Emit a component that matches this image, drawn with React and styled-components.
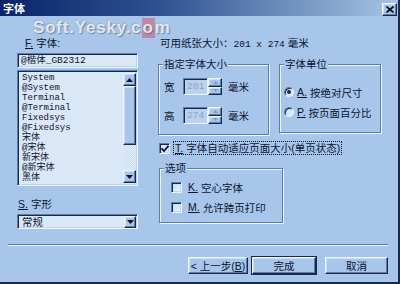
import React from 'react';
import styled, { createGlobalStyle, css } from 'styled-components';

const C = {
  bg: '#a7c6ea',
  dark: '#18294e',
  shadow: '#5e7ea8',
  light: '#eef5fd',
  field: '#dae7f7',
  text: '#0c1430',
  disabledText: '#86a6cf',
};

const GlobalStyle = createGlobalStyle`
  html, body { margin: 0; padding: 0; background: ${C.bg}; }
  body {
    width: 400px; height: 284px; overflow: hidden;
    font-family: "Liberation Sans", "Noto Sans CJK SC", sans-serif;
    font-size: 10.5px; color: ${C.text};
  }
  * { box-sizing: border-box; }
`;

const sunken = css`
  border: 1px solid;
  border-color: ${C.shadow} ${C.light} ${C.light} ${C.shadow};
  box-shadow: inset 1px 1px 0 ${C.dark}, inset -1px -1px 0 #bcd4ef;
`;

const raised = css`
  border: 1px solid;
  border-color: ${C.light} ${C.dark} ${C.dark} ${C.light};
  box-shadow: inset -1px -1px 0 ${C.shadow}, inset 1px 1px 0 #c9ddf3;
  background: ${C.bg};
`;

const Window = styled.div`
  position: relative;
  width: 400px;
  height: 284px;
  display: flex;
  flex-direction: column;
  border-right: 2px solid ${C.dark};
  border-bottom: 2px solid ${C.dark};
  background: ${C.bg};
`;

const TitleBar = styled.div`
  height: 16px;
  flex: none;
  display: flex;
  align-items: center;
  justify-content: space-between;
  padding: 0 1px 0 3px;
  background: linear-gradient(to right, #0a246a 0%, #2f5290 40%, #a6c4e4 100%);
`;

const Title = styled.span`
  color: #fff;
  font-family: "Noto Sans CJK SC", sans-serif;
  font-weight: 700;
  font-size: 11px;
  line-height: 14px;
`;

const CloseButton = styled.div`
  ${raised};
  width: 15px;
  height: 13px;
  display: flex;
  align-items: center;
  justify-content: center;
  margin-top: 2px;
`;

const Watermark = styled.div`
  position: absolute;
  left: 33px;
  top: 18px;
  font-family: "Liberation Sans", sans-serif;
  font-weight: 700;
  font-size: 17px;
  letter-spacing: 0.8px;
  color: rgba(255, 255, 255, 0.78);
  text-shadow: 1px 1px 1px rgba(70, 80, 100, 0.55), -1px -1px 0 rgba(140, 150, 170, 0.35);
  pointer-events: none;
`;

const WatermarkMark = styled.span`
  display: inline-block;
  background: rgba(205, 90, 110, 0.55);
  padding: 0 1px;
`;

const Main = styled.div`
  display: flex;
  gap: 20px;
  padding: 20px 0 0 17px;
`;

const LeftCol = styled.div`
  width: 121px;
  display: flex;
  flex-direction: column;
`;

const RightCol = styled.div`
  width: 231px;
  display: flex;
  flex-direction: column;
`;

const FieldLabel = styled.div`
  height: 14px;
  line-height: 14px;
  padding-left: ${(p) => p.$indent}px;
  margin-top: ${(p) => p.$top || 0}px;
`;

const Key = styled.span`
  text-decoration: underline;
  margin-right: 3px;
`;

const ButtonKey = styled.span`
  text-decoration: underline;
`;

const TextField = styled.div`
  ${sunken};
  height: 15px;
  margin-top: 3px;
  background: ${C.field};
  font-family: "Liberation Mono", "Noto Sans CJK SC", monospace;
  font-size: 9.5px;
  line-height: 13px;
  padding-left: 3px;
`;

const ListBox = styled.div`
  ${sunken};
  height: 116px;
  margin-top: 2px;
  background: ${C.field};
  display: flex;
  padding: 2px 1px 2px 2px;
`;

const Items = styled.div`
  flex: 1;
  padding-left: 2px;
  overflow: hidden;
`;

const Item = styled.div`
  font-family: "Liberation Mono", "Noto Sans CJK SC", monospace;
  font-size: 9px;
  line-height: 10px;
  height: 10px;
  white-space: nowrap;
`;

const ScrollBar = styled.div`
  width: 13px;
  display: flex;
  flex-direction: column;
  background: repeating-conic-gradient(#c9dcf2 0% 25%, #e4eefa 0% 50%) 0 0 / 2px 2px;
`;

const ArrowButton = styled.div`
  ${raised};
  width: 13px;
  height: 13px;
  flex: none;
  display: flex;
  align-items: center;
  justify-content: center;
`;

const Thumb = styled.div`
  ${raised};
  height: 59px;
  flex: none;
`;

const Track = styled.div`
  flex: 1;
`;

const Select = styled.div`
  ${sunken};
  height: 15px;
  margin-top: 3px;
  background: ${C.field};
  display: flex;
  align-items: stretch;
  padding: 1px;
`;

const SelectText = styled.div`
  flex: 1;
  padding-left: 3px;
  line-height: 12px;
  font-size: 10.5px;
`;

const SelectArrow = styled(ArrowButton)`
  width: 12px;
  height: 12px;
`;

const InfoText = styled.div`
  height: 14px;
  line-height: 14px;
  padding-left: 2px;
  white-space: nowrap;
`;

const Digits = styled.span`
  font-family: "Liberation Mono", monospace;
  font-size: 9.5px;
`;

const GroupRow = styled.div`
  display: flex;
  gap: 10px;
  margin-top: 14px;
`;

const Group = styled.div`
  position: relative;
  width: ${(p) => p.$w}px;
  height: ${(p) => p.$h}px;
  margin-top: ${(p) => p.$top || 0}px;
  margin-left: ${(p) => p.$left || 0}px;
  border: 1px solid ${C.shadow};
  box-shadow: 1px 1px 0 ${C.light}, inset 1px 1px 0 ${C.light};
  padding: ${(p) => p.$pad};
  display: flex;
  flex-direction: column;
  gap: ${(p) => p.$gap}px;
`;

const Legend = styled.span`
  position: absolute;
  top: -8px;
  left: 4px;
  padding: 0 1px;
  background: ${C.bg};
  line-height: 14px;
`;

const SizeRow = styled.div`
  display: flex;
  align-items: center;
  height: 17px;
`;

const SizeLabel = styled.span`
  width: 19px;
`;

const NumberField = styled.div`
  ${sunken};
  width: 25px;
  height: 17px;
  background: #b9d1ed;
  color: ${C.disabledText};
  font-family: "Liberation Mono", monospace;
  font-size: 9.5px;
  line-height: 15px;
  padding-left: 3px;
`;

const Spinner = styled.div`
  width: 14px;
  height: 17px;
  display: flex;
  flex-direction: column;
`;

const SpinHalf = styled.div`
  ${raised};
  flex: 1;
  display: flex;
  align-items: center;
  justify-content: center;
`;

const Unit = styled.span`
  margin-left: 6px;
`;

const OptionRow = styled.div`
  display: flex;
  align-items: center;
  height: 14px;
  white-space: nowrap;
`;

const Radio = styled.span`
  width: 10px;
  height: 10px;
  border-radius: 50%;
  flex: none;
  border: 1px solid;
  border-color: ${C.shadow} ${C.light} ${C.light} ${C.shadow};
  box-shadow: inset 1px 1px 0 ${C.dark};
  background: ${C.field};
  display: flex;
  align-items: center;
  justify-content: center;
  margin-right: 3px;
  &::after {
    content: '';
    width: 4px;
    height: 4px;
    border-radius: 50%;
    background: ${(p) => (p.$on ? C.dark : 'transparent')};
  }
`;

const CheckBox = styled.span`
  ${sunken};
  width: 11px;
  height: 11px;
  flex: none;
  background: ${(p) => (p.$flat ? 'linear-gradient(135deg, #c4d8f0, #eef5fd)' : C.field)};
  display: flex;
  align-items: center;
  justify-content: center;
  margin-right: ${(p) => p.$gap || 4}px;
`;

const FocusLabel = styled.span`
  outline: 1px dotted ${C.text};
  outline-offset: 0;
  padding: 0 1px;
  line-height: 12px;
`;

const CheckRow = styled(OptionRow)`
  margin-top: 6px;
  padding-left: 1px;
`;

const Separator = styled.div`
  margin: 15px 0 0 8px;
  width: 380px;
  height: 2px;
  border-top: 1px solid ${C.shadow};
  border-bottom: 1px solid ${C.light};
`;

const ButtonRow = styled.div`
  display: flex;
  justify-content: flex-end;
  align-items: center;
  margin-top: 11px;
  padding-right: 10px;
`;

const Button = styled.div`
  ${raised};
  width: ${(p) => p.$w}px;
  height: 17px;
  margin-left: ${(p) => p.$gap}px;
  display: flex;
  align-items: center;
  justify-content: center;
  line-height: 14px;
  ${(p) =>
    p.$default &&
    css`
      outline: 1px solid ${C.dark};
      outline-offset: 0;
    `}
`;

const fonts = ['System', '@System', 'Terminal', '@Terminal', 'Fixedsys', '@Fixedsys', '宋体', '@宋体', '新宋体', '@新宋体', '黑体'];

const UpArrow = () => (
  <svg width="7" height="4" viewBox="0 0 7 4"><path d="M3.5 0L7 4H0z" fill={C.text} /></svg>
);
const DownArrow = () => (
  <svg width="7" height="4" viewBox="0 0 7 4"><path d="M0 0h7L3.5 4z" fill={C.text} /></svg>
);
const SmallUp = () => (
  <svg width="5" height="3" viewBox="0 0 5 3"><path d="M2.5 0L5 3H0z" fill="#7f9cc4" /></svg>
);
const SmallDown = () => (
  <svg width="5" height="3" viewBox="0 0 5 3"><path d="M0 0h5L2.5 3z" fill="#7f9cc4" /></svg>
);
const Check = () => (
  <svg width="8" height="7" viewBox="0 0 8 7"><path d="M0.5 3.5L3 6L7.5 0.8" stroke={C.text} strokeWidth="1.8" fill="none" /></svg>
);
const CloseX = () => (
  <svg width="8" height="7" viewBox="0 0 8 7"><path d="M0.5 0.5L7.5 6.5M7.5 0.5L0.5 6.5" stroke="#000" strokeWidth="1.6" /></svg>
);

export default function App() {
  return (
    <>
      <GlobalStyle />
      <Window>
        <TitleBar>
          <Title>字体</Title>
          <CloseButton><CloseX /></CloseButton>
        </TitleBar>
        <Main>
          <LeftCol>
            <FieldLabel $indent={8}><Key>F.</Key>字体:</FieldLabel>
            <TextField>@楷体_GB2312</TextField>
            <ListBox>
              <Items>
                {fonts.map((f) => <Item key={f}>{f}</Item>)}
              </Items>
              <ScrollBar>
                <ArrowButton><UpArrow /></ArrowButton>
                <Thumb />
                <Track />
                <ArrowButton><DownArrow /></ArrowButton>
              </ScrollBar>
            </ListBox>
            <FieldLabel $indent={1} $top={11}><Key>S.</Key>字形</FieldLabel>
            <Select>
              <SelectText>常规</SelectText>
              <SelectArrow><DownArrow /></SelectArrow>
            </Select>
          </LeftCol>
          <RightCol>
            <InfoText>可用纸张大小：<Digits>201 x 274</Digits> 毫米</InfoText>
            <GroupRow>
              <Group $w={111} $h={71} $pad="13px 0 0 5px" $gap={12}>
                <Legend>指定字体大小</Legend>
                <SizeRow>
                  <SizeLabel>宽</SizeLabel>
                  <NumberField>201</NumberField>
                  <Spinner><SpinHalf><SmallUp /></SpinHalf><SpinHalf><SmallDown /></SpinHalf></Spinner>
                  <Unit>毫米</Unit>
                </SizeRow>
                <SizeRow>
                  <SizeLabel>高</SizeLabel>
                  <NumberField>274</NumberField>
                  <Spinner><SpinHalf><SmallUp /></SpinHalf><SpinHalf><SmallDown /></SpinHalf></Spinner>
                  <Unit>毫米</Unit>
                </SizeRow>
              </Group>
              <Group $w={102} $h={69} $pad="20px 0 0 4px" $gap={6}>
                <Legend>字体单位</Legend>
                <OptionRow><Radio $on /><Key>A.</Key>按绝对尺寸</OptionRow>
                <OptionRow><Radio /><Key>P.</Key>按页面百分比</OptionRow>
              </Group>
            </GroupRow>
            <CheckRow>
              <CheckBox><Check /></CheckBox>
              <FocusLabel><Key>T.</Key>字体自动适应页面大小(单页状态)</FocusLabel>
            </CheckRow>
            <Group $w={124} $h={55} $top={13} $left={1} $pad="11px 0 0 11px" $gap={6}>
              <Legend>选项</Legend>
              <OptionRow><CheckBox $flat $gap={6} /><Key>K.</Key>空心字体</OptionRow>
              <OptionRow><CheckBox $flat $gap={6} /><Key>M.</Key>允许跨页打印</OptionRow>
            </Group>
          </RightCol>
        </Main>
        <Separator />
        <ButtonRow>
          <Button $w={60} $gap={0}>&lt; 上一步(<ButtonKey>B</ButtonKey>)</Button>
          <Button $w={64} $gap={4} $default>完成</Button>
          <Button $w={63} $gap={9}>取消</Button>
        </ButtonRow>
        <Watermark>Soft.Yesky.c<WatermarkMark>o</WatermarkMark>m</Watermark>
      </Window>
    </>
  );
}
